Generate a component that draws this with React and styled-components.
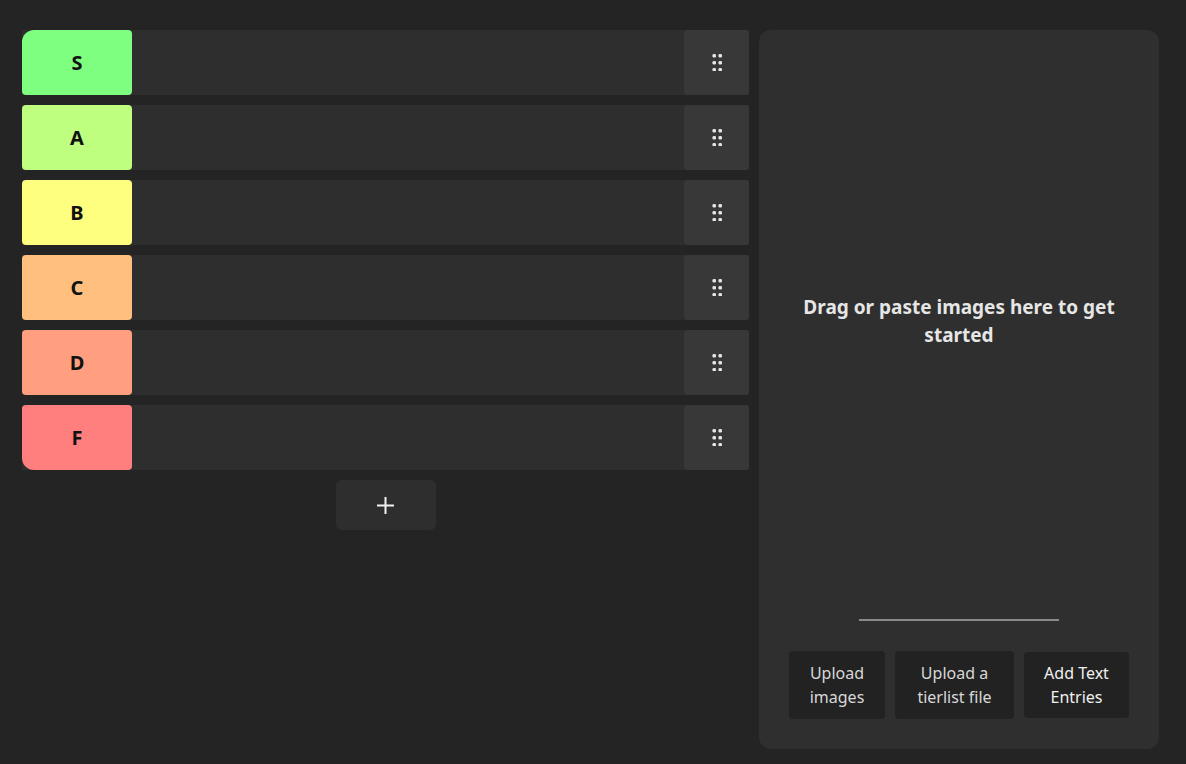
import styled, { createGlobalStyle } from "styled-components"

const Global = createGlobalStyle`
    html, body {
        margin: 0;
        background: #242424;
        font-family: "Noto Sans", "Open Sans", sans-serif;
        color: #e8e8e8;
    }
`

const Page = styled.div`
    display: flex;
    gap: 10px;
    padding: 30px 27px 15px 22px;
    height: 764px;
    box-sizing: border-box;
`

const TierColumn = styled.div`
    width: 727px;
    display: flex;
    flex-direction: column;
    gap: 10px;
`

const TierRow = styled.div`
    display: flex;
    height: 65px;
    background: #2e2e2e;
`

const Label = styled.div`
    width: 110px;
    flex: none;
    display: flex;
    align-items: center;
    justify-content: center;
    background: ${props => props.$color};
    color: #111;
    font-weight: 700;
    font-size: 20px;
    border-radius: ${props => props.$first ? "12px" : "4px"} 4px 4px ${props => props.$last ? "12px" : "4px"};
`

const Items = styled.div`
    flex: 1;
`

const Handle = styled.div`
    width: 65px;
    flex: none;
    background: #383838;
    border-radius: 4px;
    display: flex;
    align-items: center;
    justify-content: center;
`

const AddButton = styled.button`
    align-self: center;
    width: 100px;
    height: 50px;
    border: none;
    border-radius: 6px;
    background: #2e2e2e;
    display: flex;
    align-items: center;
    justify-content: center;
    cursor: pointer;
`

const Panel = styled.div`
    width: 400px;
    flex: none;
    background: #2f2f2f;
    border-radius: 12px;
    display: flex;
    flex-direction: column;
    padding: 0 30px 30px;
    box-sizing: border-box;
`

const DropText = styled.div`
    flex: 1;
    display: flex;
    align-items: center;
    justify-content: center;
    text-align: center;
    font-weight: 700;
    font-size: 19px;
    line-height: 28px;
    padding: 0 0 8px;
    color: #e6e6e6;
`

const Divider = styled.div`
    align-self: center;
    width: 200px;
    height: 2px;
    background: #8a8a8a;
    margin-bottom: 30px;
`

const Actions = styled.div`
    display: flex;
    gap: 10px;
    align-items: center;
`

const ActionButton = styled.button`
    width: ${props => props.$w}px;
    height: ${props => props.$h || 68}px;
    flex: none;
    border: none;
    border-radius: 4px;
    background: #222;
    color: ${props => props.$bright ? "#f0f0f0" : "#d8d8d8"};
    font-family: "Noto Sans", sans-serif;
    font-size: 16px;
    line-height: 24px;
    padding: 0;
    cursor: pointer;
`

const tiers = [
    { name: "S", color: "#7fff7f" },
    { name: "A", color: "#bfff7f" },
    { name: "B", color: "#ffff7f" },
    { name: "C", color: "#ffbf7f" },
    { name: "D", color: "#ff9f7f" },
    { name: "F", color: "#ff7f7f" },
]

function Dots(){
    return (
        <svg width="10" height="17" viewBox="0 0 10 17">
            {[0, 7, 14].map(y => [0, 6].map(x =>
                <rect key={x + "-" + y} x={x + 0.5} y={y} width="3.5" height="3.5" rx="1.2" fill="#e4e4e4" />
            ))}
        </svg>
    )
}

export default function App(){
    return (
        <>
            <Global />
            <Page>
                <TierColumn>
                    {tiers.map((t, i) => (
                        <TierRow key={t.name}>
                            <Label $color={t.color} $first={i === 0} $last={i === tiers.length - 1}>{t.name}</Label>
                            <Items />
                            <Handle><Dots /></Handle>
                        </TierRow>
                    ))}
                    <AddButton>
                        <svg width="17" height="17" viewBox="0 0 17 17">
                            <path d="M8.5 0v17M0 8.5h17" stroke="#f2f2f2" strokeWidth="2" />
                        </svg>
                    </AddButton>
                </TierColumn>
                <Panel>
                    <DropText>Drag or paste images here to get started</DropText>
                    <Divider />
                    <Actions>
                        <ActionButton $w={96}>Upload<br />images</ActionButton>
                        <ActionButton $w={119}>Upload a<br />tierlist file</ActionButton>
                        <ActionButton $w={105} $h={66} $bright>Add Text<br />Entries</ActionButton>
                    </Actions>
                </Panel>
            </Page>
        </>
    )
}
